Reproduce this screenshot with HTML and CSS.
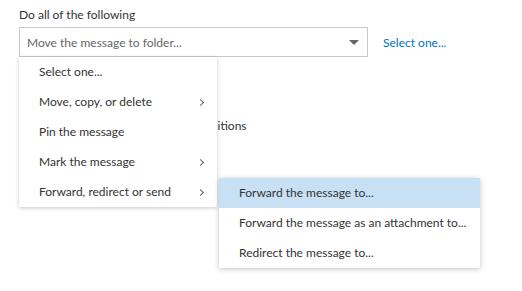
FILE: index.html
```html
<!DOCTYPE html>
<html lang="en">
<head>
  <meta charset="UTF-8">
  <title>Rule actions</title>
  <link rel="stylesheet" href="styles.css">
</head>
<body>
  <div class="container">
    <div class="label">Do all of the following</div>
    <div class="action-row">
      <div class="select">
        <span class="placeholder">Move the message to folder...</span>
        <span class="arrow"></span>
      </div>
      <a class="link" href="#">Select one...</a>
    </div>
    <div class="below">Add more conditions</div>

    <ul class="menu">
      <li>Select one...</li>
      <li class="has-sub">Move, copy, or delete</li>
      <li>Pin the message</li>
      <li class="has-sub">Mark the message</li>
      <li class="has-sub">Forward, redirect or send</li>
    </ul>

    <ul class="menu submenu">
      <li class="active">Forward the message to...</li>
      <li>Forward the message as an attachment to...</li>
      <li>Redirect the message to...</li>
    </ul>
  </div>
</body>
</html>
```

FILE: styles.css
```css
body {
  margin: 0;
  background-color: white;
  color: #333333;
  font-family: 'Lato', 'Open Sans', Arial, sans-serif;
  font-size: 12px;
}

.container {
  position: relative;
  box-sizing: border-box;
  min-height: 291px;
  padding: 5px 19px;
}

.label {
  height: 22px;
  line-height: 20px;
}

.action-row {
  display: flex;
  align-items: center;
  gap: 15px;
}

.select {
  box-sizing: border-box;
  width: 349px;
  height: 30px;
  border: 1px solid #c8c8c8;
  display: flex;
  align-items: center;
  justify-content: space-between;
  padding: 0 8px 0 7px;
}

.placeholder {
  color: #666666;
}

.arrow {
  width: 0;
  height: 0;
  margin-top: 1px;
  border-left: 5px solid transparent;
  border-right: 5px solid transparent;
  border-top: 5px solid #666666;
}

.link {
  color: #0072c6;
  text-decoration: none;
}

.below {
  margin-top: 61px;
  padding-left: 118px;
}

.menu {
  position: absolute;
  left: 19px;
  top: 57px;
  width: 198px;
  margin: 0;
  padding: 0;
  list-style: none;
  background-color: white;
  box-shadow: 0 1px 4px rgba(0, 0, 0, 0.22);
}

.menu li {
  position: relative;
  height: 30px;
  line-height: 30px;
  padding-left: 20px;
  white-space: nowrap;
}

.menu li.has-sub::after {
  content: '';
  position: absolute;
  right: 14px;
  top: 13px;
  width: 4px;
  height: 4px;
  border-top: 1px solid #666666;
  border-right: 1px solid #666666;
  transform: rotate(45deg);
}

.submenu {
  left: 219px;
  top: 178px;
  width: 261px;
  box-shadow: 0 1px 5px rgba(0, 0, 0, 0.25);
}

.submenu li.active {
  background-color: #c7e0f4;
}
```
